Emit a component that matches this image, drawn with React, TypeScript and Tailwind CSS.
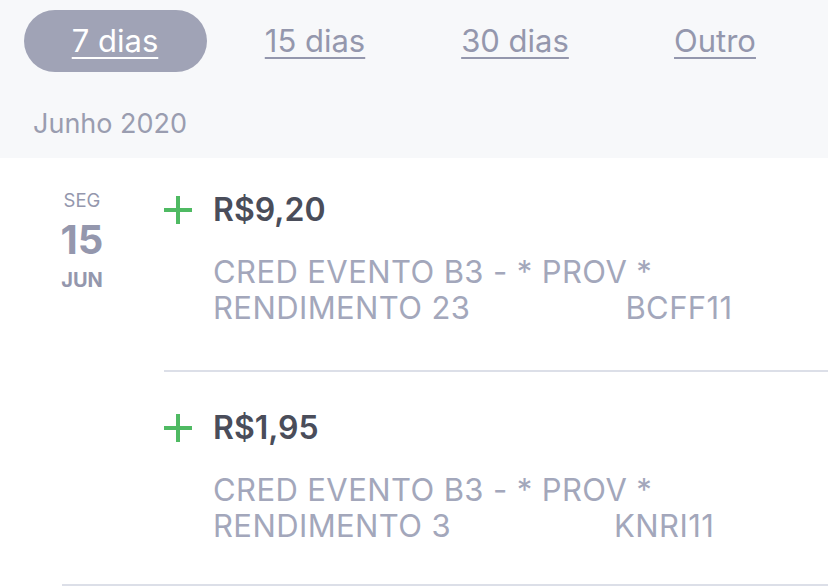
export default function App() {
  const tabs = ["7 dias", "15 dias", "30 dias", "Outro"];
  const active = 0;
  const items = [
    { value: "R$9,20", line1: "CRED EVENTO B3 - * PROV *", line2: "RENDIMENTO 23", ticker: "BCFF11", gap: "ml-[155px]" },
    { value: "R$1,95", line1: "CRED EVENTO B3 - * PROV *", line2: "RENDIMENTO 3", ticker: "KNRI11", gap: "ml-[163px]" },
  ];

  return (
    <div className="w-[828px] h-[588px] overflow-hidden bg-white font-['Inter',sans-serif]">
      <div className="h-[158px] bg-[#f7f8fa]">
        <div className="flex pl-[15px] pt-[10px]">
          {tabs.map((t, i) => (
            <div key={t} className="w-[200px] flex justify-center">
              <div
                className={`w-[183px] h-[62px] rounded-full flex items-center justify-center text-[31px] underline underline-offset-[5px] decoration-2 ${
                  i === active ? "bg-[#a0a3b6] text-white" : "text-[#9497ad]"
                }`}
              >
                {t}
              </div>
            </div>
          ))}
        </div>
        <p className="pl-[33px] pt-[38px] text-[27px] text-[#9a9db0] leading-none">Junho 2020</p>
      </div>

      <div className="flex">
        <div className="w-[164px] shrink-0 flex flex-col items-center pt-[33px] text-[#9497ad]">
          <span className="text-[18.5px] leading-none">SEG</span>
          <span className="text-[40px] font-bold leading-none mt-[10px]">15</span>
          <span className="text-[20px] font-bold leading-none mt-[10px]">JUN</span>
        </div>
        <div className="flex-1">
          {items.map((it, i) => (
            <div key={i} className={`${i === 0 ? "pt-[36px]" : "pt-[40px]"} h-[214px] border-b-2 border-[#dcdfe8] ${i === items.length - 1 ? "-ml-[102px] pl-[102px]" : ""}`}>
              <div className="flex items-center">
                <svg width="28" height="28" viewBox="0 0 28 28" className="shrink-0">
                  <path d="M14 0v28M0 14h28" stroke="#4fba63" strokeWidth="4" />
                </svg>
                <span className="ml-[21px] text-[32px] font-semibold text-[#4a4d5a] leading-none">{it.value}</span>
              </div>
              <div className="ml-[49px] mt-[28px] text-[31px] tracking-[0.4px] leading-[36px] text-[#a3a7bb]">
                <div>{it.line1}</div>
                <div className="flex">
                  <span>{it.line2}</span>
                  <span className={it.gap}>{it.ticker}</span>
                </div>
              </div>
            </div>
          ))}
        </div>
      </div>
    </div>
  );
}
